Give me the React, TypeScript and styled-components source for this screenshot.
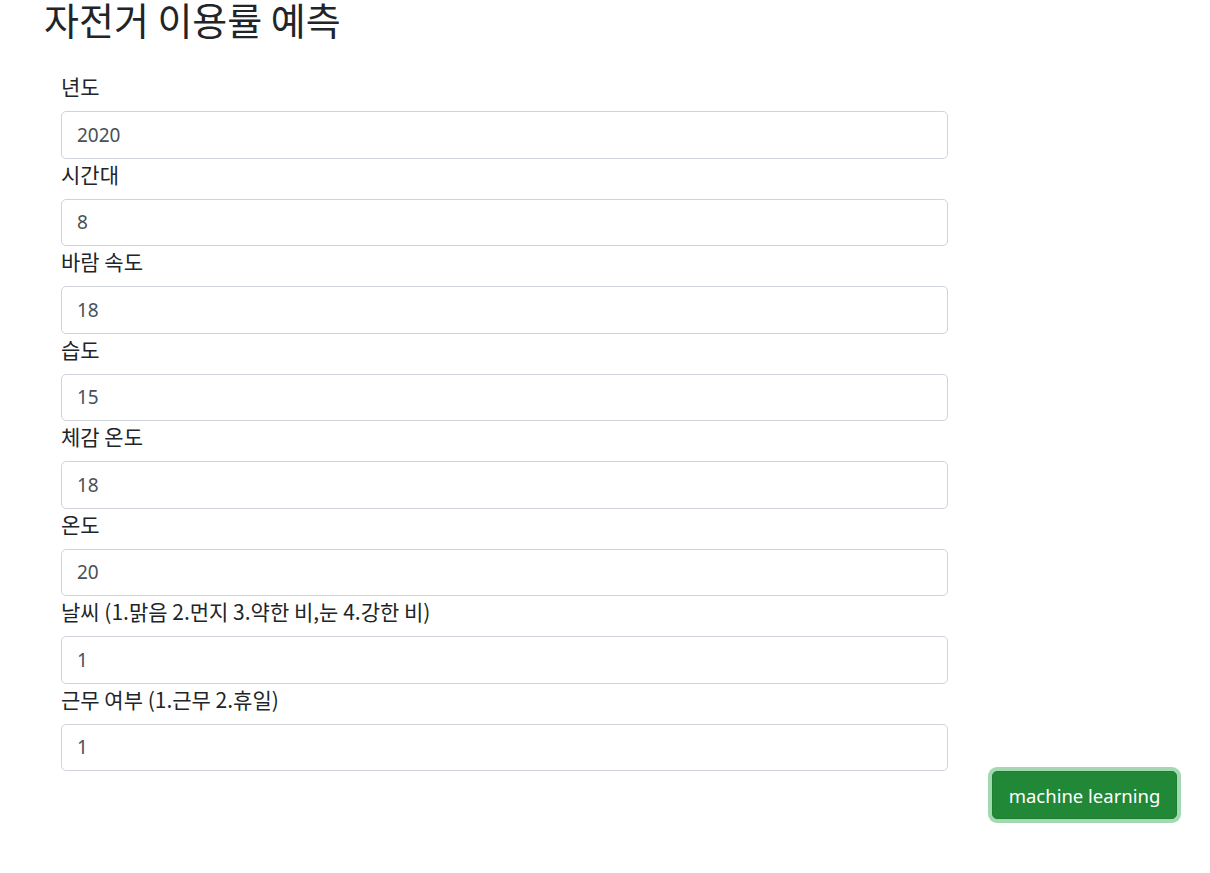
import styled, { createGlobalStyle } from "styled-components";

const GlobalStyle = createGlobalStyle`
  body {
    margin: 0;
    background: #fff;
    color: #212529;
    font-family: "Noto Sans", "Noto Sans CJK KR", "Open Sans", sans-serif;
    font-size: 20px;
    line-height: 1.5;
  }
`

const Page = styled.div`
  padding: 0 33px 40px 44px;
`

const Title = styled.h3`
  margin: 0 0 33px;
  font-size: 38px;
  font-weight: 400;
  line-height: 38px;
  font-family: "Noto Sans CJK KR", "Noto Sans", sans-serif;
`

const Form = styled.form`
  width: 887px;
  margin-left: 17px;
`

const Group = styled.div`
  display: flex;
  flex-direction: column;
`

const Label = styled.label`
  font-size: 21px;
  line-height: 30px;
  margin-bottom: 10px;
  font-family: "Noto Sans CJK KR", "Noto Sans", sans-serif;
`

const Input = styled.input`
  box-sizing: border-box;
  width: 100%;
  height: 47.5px;
  padding: 7.5px 15px;
  font-size: 19px;
  font-family: "Noto Sans", sans-serif;
  color: #495057;
  border: 1px solid #ced4da;
  border-radius: 5px;
  background: #fff;
  outline: none;
`

const Actions = styled.div`
  display: flex;
  justify-content: flex-end;
`

const Button = styled.button`
  box-sizing: border-box;
  width: 185px;
  height: 48px;
  padding: 0 15px;
  font-size: 18.5px;
  font-family: "Noto Sans", sans-serif;
  color: #fff;
  background-color: #218838;
  border: 1px solid #1e7e34;
  border-radius: 5px;
  box-shadow: 0 0 0 4px rgba(72, 180, 97, 0.5);
  cursor: pointer;
`

const fields = [
  { label: "년도", value: "2020" },
  { label: "시간대", value: "8" },
  { label: "바람 속도", value: "18" },
  { label: "습도", value: "15" },
  { label: "체감 온도", value: "18" },
  { label: "온도", value: "20" },
  { label: "날씨 (1.맑음 2.먼지 3.약한 비,눈 4.강한 비)", value: "1" },
  { label: "근무 여부 (1.근무 2.휴일)", value: "1" },
]

function App() {
  return (
    <Page>
      <GlobalStyle />
      <Title>자전거 이용률 예측</Title>
      <Form>
        {fields.map((f, i) => (
          <Group key={i}>
            <Label htmlFor={"f" + i}>{f.label}</Label>
            <Input id={"f" + i} defaultValue={f.value} />
          </Group>
        ))}
      </Form>
      <Actions>
        <Button type="button">machine learning</Button>
      </Actions>
    </Page>
  )
}

export default App
